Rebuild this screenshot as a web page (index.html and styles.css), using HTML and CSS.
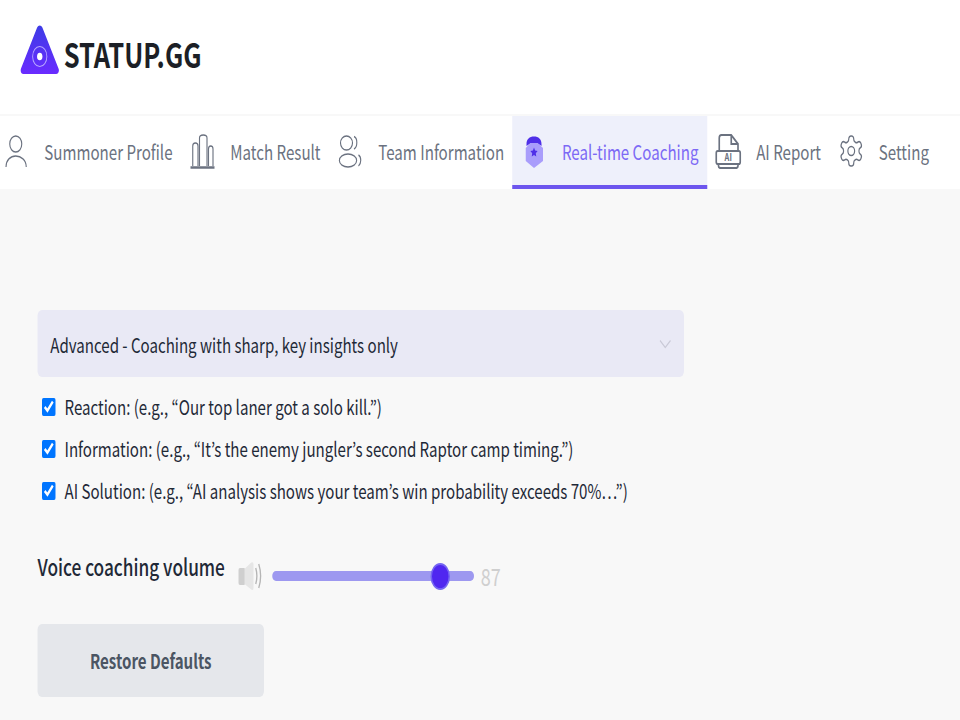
FILE: index.html
```html
<!DOCTYPE html>
<html lang="en">
<head>
<meta charset="utf-8">
<title>STATUP.GG</title>
<link rel="stylesheet" href="styles.css">
</head>
<body>
<div class="page">
  <header class="brand">
    <svg class="logo" viewBox="0 0 52 50" aria-hidden="true">
      <defs><linearGradient id="lg" x1="0" y1="0" x2="0" y2="1"><stop offset="0" stop-color="#3d3ce6"/><stop offset="1" stop-color="#6a2bff"/></linearGradient></defs>
      <path d="M22.5 2.5c1.600-2.800 5.400-2.800 7 0l21.500 41c1.500 2.800-.2 5.500-3.200 5.500H4.200c-3 0-4.700-2.700-3.200-5.500z" fill="url(#lg)"/>
      <ellipse cx="26" cy="31.500" rx="9.500" ry="10" fill="none" stroke="#b9a8ff" stroke-width="1.200"/>
      <ellipse cx="26" cy="31.500" rx="3.600" ry="3.800" fill="#fff"/>
    </svg>
    <span class="brand-name">STATUP.GG</span>
  </header>
  <nav class="tabs">
    <a class="tab">
      <svg class="tab-icon" viewBox="0 0 36 36"><circle cx="17" cy="11" r="8" class="line"/><path d="M4 34C4 27 10 23 17 23S31 27 31 34" class="line"/></svg>
      <span>Summoner Profile</span>
    </a>
    <a class="tab">
      <svg class="tab-icon" viewBox="0 0 36 36"><path d="M5 33V13q0-3 3.500-3T12 13V33M14 33V5q0-3 5-3t5 3V33M26 33V16q0-3 3-3t3 3V33" class="line"/><path d="M2 34.500H34" class="line thick"/></svg>
      <span>Match Result</span>
    </a>
    <a class="tab">
      <svg class="tab-icon" viewBox="0 0 36 36"><ellipse cx="13" cy="10" rx="8" ry="7" class="line"/><ellipse cx="15" cy="27.500" rx="11.500" ry="6.500" class="line"/><path d="M23 3.500C28 5 28 14 23 16M29 22C33 24 33 30 29 33" class="line"/></svg>
      <span>Team Information</span>
    </a>
    <a class="tab is-active">
      <svg class="tab-icon" viewBox="0 0 36 36"><path d="M8 13V11C8 6 12 3.500 18 3.500S28 6 28 11V13L24 11C22 9.500 14 9.500 12 11Z" fill="#4f2fe8"/><path d="M7 15L13 10H23L30 15V28L18 35L7 28Z" fill="#a99dfb"/><path d="M18 14.500l1.500 3 3.300.4-2.400 2.300.6 3.300-3-1.600-3 1.600.6-3.300-2.400-2.300 3.300-.4z" fill="#4f2fe8"/></svg>
      <span>Real-time Coaching</span>
    </a>
    <a class="tab">
      <svg class="tab-icon" viewBox="0 0 36 36"><path d="M6 18V5q0-3 3-3H22L31 11V18M22 2V11H31M5 31V33q0 2 3 2H28q3 0 3-2V31" class="line bold"/><rect x="2" y="18" width="32" height="13" rx="2" class="line bold"/><text x="18" y="28.500" class="ai-text">AI</text></svg>
      <span>AI Report</span>
    </a>
    <a class="tab">
      <svg class="tab-icon" viewBox="0 0 24 24" preserveAspectRatio="none"><path d="M12.220 2h-.44a2 2 0 0 0-2 2v.18a2 2 0 0 1-1 1.730l-.43.25a2 2 0 0 1-2 0l-.15-.08a2 2 0 0 0-2.730.73l-.22.38a2 2 0 0 0 .73 2.730l.15.1a2 2 0 0 1 1 1.720v.51a2 2 0 0 1-1 1.740l-.15.09a2 2 0 0 0-.73 2.730l.22.38a2 2 0 0 0 2.730.73l.15-.08a2 2 0 0 1 2 0l.43.25a2 2 0 0 1 1 1.730V20a2 2 0 0 0 2 2h.44a2 2 0 0 0 2-2v-.18a2 2 0 0 1 1-1.730l.43-.25a2 2 0 0 1 2 0l.15.08a2 2 0 0 0 2.730-.73l.22-.39a2 2 0 0 0-.73-2.730l-.15-.08a2 2 0 0 1-1-1.740v-.5a2 2 0 0 1 1-1.740l.15-.09a2 2 0 0 0 .73-2.730l-.22-.38a2 2 0 0 0-2.730-.73l-.15.08a2 2 0 0 1-2 0l-.43-.25a2 2 0 0 1-1-1.730V4a2 2 0 0 0-2-2z" class="line gear"/><circle cx="12" cy="12" r="3" class="line gear"/></svg>
      <span>Setting</span>
    </a>
  </nav>
  <main class="content">
    <div class="select">
      <span class="select-text">Advanced - Coaching with sharp, key insights only</span>
      <svg class="chevron" viewBox="0 0 16 10"><path d="M1 1.500L8 8.500L15 1.500" fill="none" stroke="#c9c9d6" stroke-width="1.500"/></svg>
    </div>
    <ul class="options">
      <li><label class="option"><input type="checkbox" checked><span>Reaction: (e.g., “Our top laner got a solo kill.”)</span></label></li>
      <li><label class="option"><input type="checkbox" checked><span>Information: (e.g., “It’s the enemy jungler’s second Raptor camp timing.”)</span></label></li>
      <li><label class="option"><input type="checkbox" checked><span>AI Solution: (e.g., “AI analysis shows your team’s win probability exceeds 70%…”)</span></label></li>
    </ul>
    <div class="volume">
      <span class="volume-label">Voice coaching volume</span>
      <svg class="speaker" viewBox="0 0 34 30"><rect x="1" y="7" width="9" height="17" rx="2" fill="#cfcfcf"/><path d="M9 8L18 1.500Q21 .5 21 3V27Q21 30 18 28.500L9 23Z" fill="#e6e6e6"/><path d="M24 7Q27 15 24 23M28 3Q33 15 28 27" fill="none" stroke="#b5b5b5" stroke-width="1.800"/></svg>
      <input class="slider" type="range" min="0" max="100" value="87">
      <span class="volume-value">87</span>
    </div>
    <button class="restore" type="button">Restore Defaults</button>
  </main>
</div>
</body>
</html>
```
FILE: styles.css
```css
html, body {
  margin: 0;
  height: 720px;
  overflow: hidden;
  background: #f8f8f8;
}

.page {
  width: 1280px;
  height: 720px;
  overflow: hidden;
  transform: scaleX(.75);
  transform-origin: 0 0;
  font-family: "Noto Sans CJK KR", "Noto Sans", sans-serif;
  color: #1f2937;
}

.brand {
  height: 114px;
  box-sizing: border-box;
  padding: 0 0 29px 27px;
  background: #fff;
  display: flex;
  align-items: center;
  gap: 6px;
}

.logo {
  width: 52px;
  height: 50px;
  margin-top: 15px;
}

.brand-name {
  font-size: 34px;
  font-weight: 700;
  color: #1c1f26;
  margin-top: 26px;
  line-height: 1;
  padding-bottom: 4px;
}

.tabs {
  margin-top: 2px;
  height: 73px;
  background: #fff;
  display: flex;
}

.tab {
  box-sizing: border-box;
  height: 73px;
  padding: 0 11px;
  display: flex;
  align-items: center;
  gap: 19px;
  font-size: 20.150px;
  color: #6b7280;
  white-space: nowrap;
  border-bottom: 4px solid transparent;
}

.tab span {
  margin-top: 2px;
}

.tab:first-child {
  padding-left: 4px;
}

.tab.is-active {
  padding-right: 12px;
  background: #eef0fb;
  color: #7c69f5;
  border-bottom-color: #6c55ee;
}

.tab.is-active + .tab {
  padding-left: 10px;
}

.tab-icon {
  width: 36px;
  height: 36px;
  flex: none;
}

.line {
  fill: none;
  stroke: #6b7280;
  stroke-width: 1.500;
}

.line.thick {
  stroke-width: 2.500;
}

.line.bold {
  stroke-width: 2.200;
}

.line.gear {
  stroke-width: 1.050;
}

.ai-text {
  font-size: 10px;
  font-weight: 700;
  fill: #6b7280;
  text-anchor: middle;
}

.content {
  padding: 121px 0 0 50px;
}

.select {
  width: 862px;
  height: 67px;
  box-sizing: border-box;
  padding: 0 17px;
  border-radius: 6px;
  background: #e9e9f5;
  display: flex;
  align-items: center;
  justify-content: space-between;
  font-size: 20.100px;
}

.select-text {
  padding-top: 1px;
}

.chevron {
  width: 16px;
  height: 10px;
}

.options {
  list-style: none;
  margin: 9px 0 0;
  padding: 0;
}

.options li {
  height: 42px;
}

.option {
  height: 42px;
  padding-left: 6px;
  display: flex;
  align-items: center;
  gap: 12px;
  font-size: 20.100px;
}

.option span {
  margin-top: -2px;
}

.option input {
  width: 18px;
  height: 18px;
  margin: 0;
  flex: none;
}

.volume {
  margin-top: 35px;
  height: 58px;
  display: flex;
  align-items: center;
}

.volume-label {
  font-size: 23px;
  font-weight: 500;
  margin-top: -20px;
  width: 267px;
  white-space: nowrap;
  flex: none;
}

.speaker {
  width: 34px;
  height: 30px;
  flex: none;
}

.slider {
  -webkit-appearance: none;
  appearance: none;
  width: 269px;
  height: 27px;
  margin: 0 0 0 12px;
  background: transparent;
  flex: none;
}

.slider::-webkit-slider-runnable-track {
  height: 10px;
  border-radius: 5px;
  background: #9d98f0;
}

.slider::-webkit-slider-thumb {
  -webkit-appearance: none;
  width: 26px;
  height: 27px;
  margin-top: -8.500px;
  box-sizing: border-box;
  border-radius: 50%;
  background: #5027f0;
  border: 2px solid #7566f2;
}

.volume-value {
  margin-left: 9px;
  font-size: 24px;
  margin-top: -2px;
  color: #cfcfcf;
}

.restore {
  display: block;
  margin-top: 19px;
  width: 302px;
  height: 73px;
  border: 0;
  border-radius: 6px;
  background: #e5e7eb;
  color: #4b5563;
  font-family: inherit;
  font-size: 20.100px;
  font-weight: 700;
}
```
